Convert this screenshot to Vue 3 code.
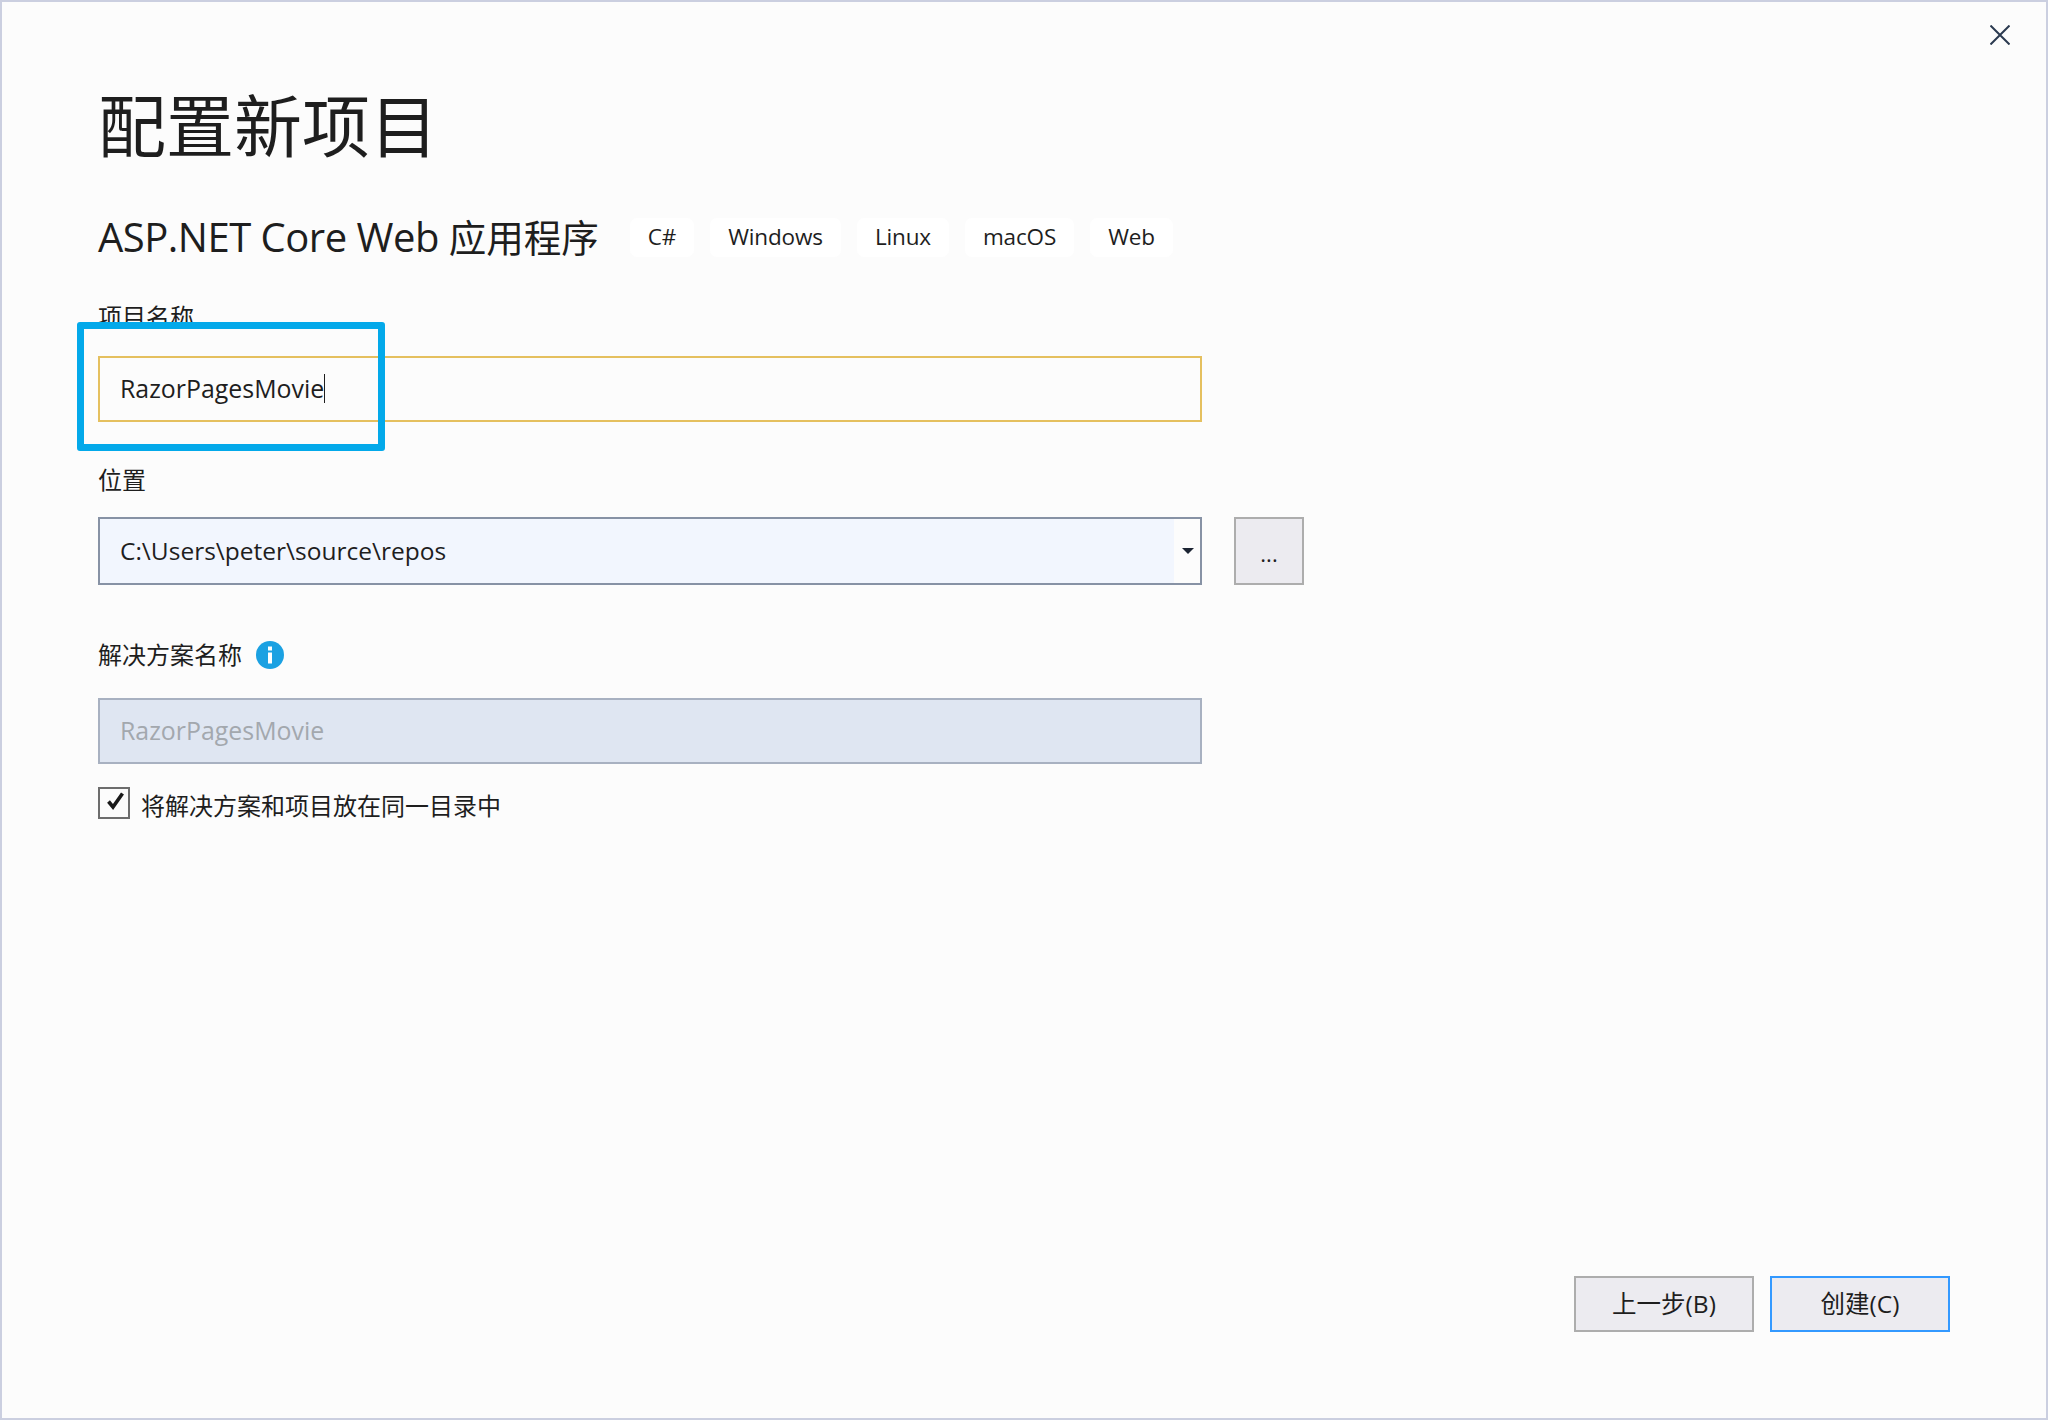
<script setup>
const tags = ['C#', 'Windows', 'Linux', 'macOS', 'Web']
</script>

<template>
  <div class="dialog">
    <button class="close" aria-label="Close">
      <svg width="20" height="20" viewBox="0 0 20 20">
        <path d="M0.5 0.5 L19.5 19.5 M19.5 0.5 L0.5 19.5" stroke="#2b3a50" stroke-width="2" fill="none" />
      </svg>
    </button>

    <h1 class="title">配置新项目</h1>

    <div class="subtitle-row">
      <h2 class="subtitle">ASP.NET Core Web <span class="subtitle-cjk">应用程序</span></h2>
      <ul class="tags">
        <li v-for="tag in tags" :key="tag" class="tag">{{ tag }}</li>
      </ul>
    </div>

    <div class="label name-label">项目名称</div>
    <div class="field field-focus">
      <span>RazorPagesMovie</span><span class="caret"></span>
    </div>

    <div class="label location-label">位置</div>
    <div class="location-row">
      <div class="combo">
        <div class="combo-text">C:\Users\peter\source\repos</div>
        <div class="combo-arrow"><span class="arrow"></span></div>
      </div>
      <button class="browse">...</button>
    </div>

    <div class="label solution-label">
      解决方案名称
      <svg class="info" width="28" height="28" viewBox="0 0 28 28">
        <circle cx="14" cy="14" r="14" fill="#1ba1e2" />
        <rect x="12" y="11.5" width="4" height="11" fill="#fff" />
        <rect x="12" y="5.5" width="4" height="4" fill="#fff" />
      </svg>
    </div>
    <div class="field field-disabled">RazorPagesMovie</div>

    <div class="check-row">
      <span class="checkbox">
        <svg width="28" height="28" viewBox="0 0 28 28">
          <path d="M8.5 12.5 L13 18 L22.5 4.5" stroke="#1a1a1a" stroke-width="3.6" fill="none" />
        </svg>
      </span>
      <span class="check-text">将解决方案和项目放在同一目录中</span>
    </div>

    <div class="footer">
      <button class="btn">上一步(B)</button>
      <button class="btn btn-primary">创建(C)</button>
    </div>

    <!-- annotation drawn on top of the screenshot -->
    <div class="highlight"></div>
  </div>
</template>

<style>
html,
body {
  margin: 0;
  background: #fcfcfc;
}
</style>

<style scoped>
.dialog {
  position: relative;
  box-sizing: border-box;
  width: 2048px;
  height: 1420px;
  display: flex;
  flex-direction: column;
  padding: 84px 96px 86px;
  background: #fcfcfc;
  border: 2px solid #cbcfe0;
  color: #1e1e1e;
  font-family: "Open Sans", "Noto Sans CJK SC", sans-serif;
  font-size: 24px;
}

.close {
  position: absolute;
  top: 23px;
  right: 36px;
  width: 20px;
  height: 20px;
  padding: 0;
  border: none;
  background: none;
}

.close svg {
  display: block;
}

.title {
  margin: 0;
  font-size: 68px;
  font-weight: 400;
  line-height: 80px;
  color: #1e1e1e;
}

.subtitle-row {
  display: flex;
  align-items: center;
  margin-top: 52px;
  height: 39px;
}

.subtitle {
  margin: 0 0 3px;
  font-size: 40px;
  font-weight: 400;
  letter-spacing: -0.5px;
  white-space: nowrap;
}

.subtitle-cjk {
  font-size: 37.5px;
  letter-spacing: 0;
}

.tags {
  display: flex;
  gap: 16px;
  margin: 0 0 0 31px;
  padding: 0;
  list-style: none;
}

.tag {
  height: 39px;
  line-height: 38px;
  padding: 0 18px;
  background: #fff;
  border-radius: 7px;
  font-size: 22.5px;
  letter-spacing: -0.15px;
}

.label {
  line-height: 30px;
  height: 30px;
  white-space: nowrap;
}

.name-label {
  margin-top: 45px;
}

.location-label {
  margin-top: 43px;
}

.solution-label {
  display: flex;
  align-items: center;
  gap: 14px;
  margin-top: 55px;
}

.info {
  display: block;
}

.field {
  box-sizing: border-box;
  width: 1104px;
  display: flex;
  align-items: center;
  padding: 0 0 2px 20px;
  border: 2px solid;
  font-size: 24.9px;
}

.field-focus {
  height: 66px;
  margin-top: 24px;
  border-color: #e5c05f;
}

.caret {
  width: 1px;
  height: 29px;
  background: #1e1e1e;
}

.location-row {
  display: flex;
  gap: 32px;
  margin-top: 22px;
}

.combo {
  box-sizing: border-box;
  width: 1104px;
  height: 68px;
  display: flex;
  border: 2px solid #8792a5;
  background: #fcfcfc;
}

.combo-text {
  flex: 1;
  display: flex;
  align-items: center;
  padding: 0 0 2px 20px;
  background: #f2f6fe;
  font-size: 24.5px;
}

.combo-arrow {
  box-sizing: border-box;
  width: 26px;
  padding-left: 2px;
  display: flex;
  align-items: center;
  justify-content: center;
}

.arrow {
  width: 0;
  height: 0;
  border-left: 6px solid transparent;
  border-right: 6px solid transparent;
  border-top: 6px solid #1c2433;
}

.browse {
  box-sizing: border-box;
  width: 70px;
  height: 68px;
  padding: 4px 0 0;
  border: 2px solid #adadad;
  background: #ecebf0;
  color: #1e1e1e;
  font-family: inherit;
  font-size: 22px;
}

.field-disabled {
  height: 66px;
  margin-top: 28px;
  border-color: #a8b1c1;
  background: #dfe6f2;
  color: #a3a8ae;
}

.check-row {
  display: flex;
  align-items: center;
  gap: 11px;
  height: 32px;
  margin-top: 23px;
}

.check-text {
  padding-top: 2px;
}

.checkbox {
  box-sizing: border-box;
  width: 32px;
  height: 32px;
  display: block;
  border: 2px solid #6d6d6d;
  background: #fcfcfc;
}

.checkbox svg {
  display: block;
}

.footer {
  display: flex;
  justify-content: flex-end;
  gap: 16px;
  margin-top: auto;
}

.btn {
  box-sizing: border-box;
  width: 180px;
  height: 56px;
  padding: 0 0 3px;
  border: 2px solid #adadad;
  background: #ecebf0;
  color: #1e1e1e;
  font-family: inherit;
  font-size: 24.5px;
}

.btn-primary {
  border-color: #3399ff;
}

.highlight {
  position: absolute;
  left: 75px;
  top: 320px;
  box-sizing: border-box;
  width: 308px;
  height: 129px;
  border: 7px solid #03a9ea;
  border-radius: 3px;
}
</style>
